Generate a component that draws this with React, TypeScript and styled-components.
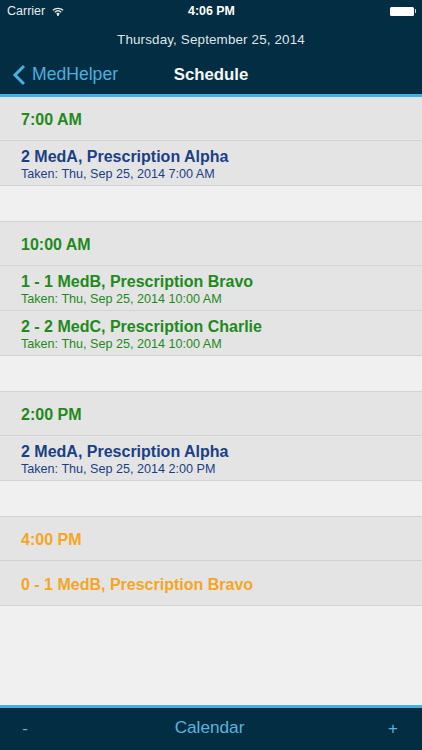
import React from "react";
import styled, { createGlobalStyle } from "styled-components";

const GlobalStyle = createGlobalStyle`
  html, body {
    margin: 0;
    padding: 0;
    background: #f0f0f0;
  }
  * {
    box-sizing: border-box;
  }
`;

const colors = {
  green: "#1f8a1c",
  navy: "#1b3f85",
  orange: "#f6a623",
};

const Screen = styled.div`
  width: 422px;
  height: 750px;
  display: flex;
  flex-direction: column;
  overflow: hidden;
  background: #f0f0f0;
  font-family: "Liberation Sans", Arial, sans-serif;
`;

const TopBar = styled.header`
  height: 97px;
  flex: none;
  background: #022d42;
  border-bottom: 3px solid #41b0de;
  color: #fff;
`;

const StatusBar = styled.div`
  height: 22px;
  padding: 0 6px 0 7px;
  display: grid;
  grid-template-columns: 1fr auto 1fr;
  align-items: center;
  font-size: 12.5px;
  color: #e6ecef;
`;

const Carrier = styled.div`
  display: flex;
  align-items: center;
  gap: 7px;
`;

const Clock = styled.div`
  font-weight: bold;
  font-size: 12.4px;
  color: #fff;
`;

const Battery = styled.div`
  justify-self: end;
  display: flex;
  align-items: center;
  gap: 1px;
`;

const BatteryBody = styled.div`
  width: 24px;
  height: 9px;
  background: #fff;
  border-radius: 1.5px;
`;

const BatteryCap = styled.div`
  width: 1.5px;
  height: 4px;
  background: #c9d3d8;
`;

const DateLine = styled.div`
  height: 33px;
  padding-top: 2px;
  display: flex;
  align-items: center;
  justify-content: center;
  font-size: 13.4px;
  letter-spacing: 0.15px;
  color: #dfe6ea;
`;

const NavBar = styled.nav`
  height: 39px;
  display: grid;
  grid-template-columns: 1fr auto 1fr;
  align-items: center;
  padding: 0 12px;
`;

const BackLink = styled.a`
  display: flex;
  align-items: center;
  gap: 6px;
  color: #4bb0dc;
  font-size: 17.6px;
`;

const NavTitle = styled.div`
  font-weight: bold;
  font-size: 16.8px;
  color: #f4f7f8;
`;

const Content = styled.main`
  flex: 1;
  background: #f0f0f0;
`;

const Section = styled.section`
  margin-bottom: 35px;
  border-top: 1px solid #d3d3d3;

  &:first-child {
    border-top: none;
  }
`;

const Band = styled.div<{ $height: number }>`
  height: ${(p) => p.$height}px;
  background: #e4e4e4;
  padding-left: 21px;
`;

const SectionHeader = styled(Band)<{ $color: string }>`
  display: flex;
  align-items: center;
  font-size: 16px;
  font-weight: bold;
  padding-top: 2px;
  color: ${(p) => p.$color};
`;

const Rule = styled.div`
  height: 1px;
  background: #d3d3d3;
`;

const Row = styled(Band)<{ $color: string }>`
  display: flex;
  flex-direction: column;
  justify-content: center;
  padding-top: 4px;
  color: ${(p) => p.$color};
`;

const RowTitle = styled.div`
  font-size: 16px;
  line-height: 18px;
  font-weight: bold;
`;

const RowDetail = styled.div`
  font-size: 12.6px;
  line-height: 15px;
  padding-top: 1px;
`;

const ToolBar = styled.footer`
  height: 45px;
  flex: none;
  background: #022d42;
  border-top: 3px solid #41b0de;
  padding: 0 24px 4px 20px;
  display: flex;
  align-items: center;
  justify-content: space-between;
  color: #5ab3dc;
`;

const ToolGlyph = styled.span`
  font-size: 17px;
  width: 10px;
  text-align: center;
  padding-top: 4px;
`;

const ToolLabel = styled.span`
  font-size: 17.2px;
  margin-left: 1px;
`;

type Entry = { title: string; detail?: string; color: string };
type Group = { time: string; color: string; entries: Entry[] };

const schedule: Group[] = [
  {
    time: "7:00 AM",
    color: colors.green,
    entries: [
      { title: "2 MedA, Prescription Alpha", detail: "Taken: Thu, Sep 25, 2014 7:00 AM", color: colors.navy },
    ],
  },
  {
    time: "10:00 AM",
    color: colors.green,
    entries: [
      { title: "1 - 1 MedB, Prescription Bravo", detail: "Taken: Thu, Sep 25, 2014 10:00 AM", color: colors.green },
      { title: "2 - 2 MedC, Prescription Charlie", detail: "Taken: Thu, Sep 25, 2014 10:00 AM", color: colors.green },
    ],
  },
  {
    time: "2:00 PM",
    color: colors.green,
    entries: [
      { title: "2 MedA, Prescription Alpha", detail: "Taken: Thu, Sep 25, 2014 2:00 PM", color: colors.navy },
    ],
  },
  {
    time: "4:00 PM",
    color: colors.orange,
    entries: [{ title: "0 - 1 MedB, Prescription Bravo", color: colors.orange }],
  },
];

function WifiIcon() {
  return (
    <svg width="12" height="9" viewBox="0 0 14 10" fill="none" stroke="#e6ecef" strokeWidth="1.5">
      <path d="M1 3.6C4.4.6 9.6.6 13 3.6" />
      <path d="M3.2 5.8C5.4 3.9 8.6 3.9 10.8 5.8" />
      <path d="M5.3 7.8C6.3 7 7.7 7 8.7 7.8" />
      <circle cx="7" cy="9" r="0.5" fill="#e6ecef" />
    </svg>
  );
}

function BackChevron() {
  return (
    <svg width="14" height="22" viewBox="0 0 14 22" fill="none" stroke="#4bb0dc" strokeWidth="3">
      <path d="M12 2L3 11l9 9" />
    </svg>
  );
}

export default function App() {
  return (
    <Screen>
      <GlobalStyle />
      <TopBar>
        <StatusBar>
          <Carrier>
            Carrier
            <WifiIcon />
          </Carrier>
          <Clock>4:06 PM</Clock>
          <Battery>
            <BatteryBody />
            <BatteryCap />
          </Battery>
        </StatusBar>
        <DateLine>Thursday, September 25, 2014</DateLine>
        <NavBar>
          <BackLink>
            <BackChevron />
            MedHelper
          </BackLink>
          <NavTitle>Schedule</NavTitle>
        </NavBar>
      </TopBar>
      <Content>
        {schedule.map((group) => (
          <Section key={group.time}>
            <SectionHeader $height={43} $color={group.color}>
              {group.time}
            </SectionHeader>
            {group.entries.map((entry) => (
              <React.Fragment key={entry.title}>
                <Rule />
                <Row $height={44} $color={entry.color}>
                  <RowTitle>{entry.title}</RowTitle>
                  {entry.detail && <RowDetail>{entry.detail}</RowDetail>}
                </Row>
              </React.Fragment>
            ))}
            <Rule />
          </Section>
        ))}
      </Content>
      <ToolBar>
        <ToolGlyph>-</ToolGlyph>
        <ToolLabel>Calendar</ToolLabel>
        <ToolGlyph>+</ToolGlyph>
      </ToolBar>
    </Screen>
  );
}
